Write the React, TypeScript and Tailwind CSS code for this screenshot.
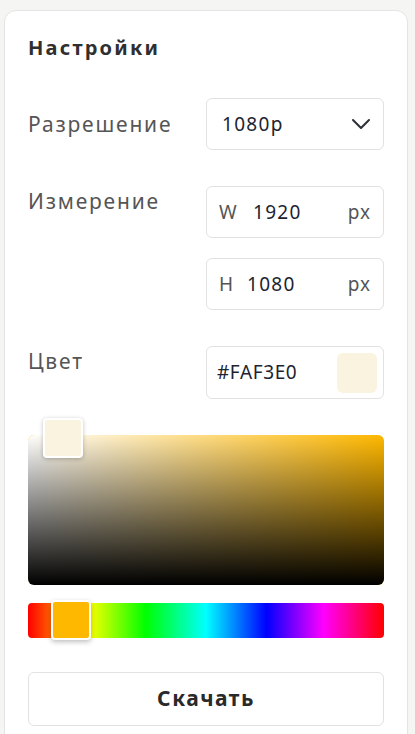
import React from "react";

const FONT = "font-['Noto_Sans','DejaVu_Sans',sans-serif]";

const Chevron = () => (
  <svg width="20" height="12" viewBox="0 0 20 12" fill="none">
    <path d="M2 2l8 8 8-8" stroke="#2b2f36" strokeWidth="2" strokeLinecap="round" strokeLinejoin="round" />
  </svg>
);

const Field = ({ children }: { children: React.ReactNode }) => (
  <div className="flex h-[52px] w-[178px] items-center rounded-md border border-[#e2e2e2] bg-white pl-[12px] pr-3">
    {children}
  </div>
);

export default function App() {
  return (
    <div className={`min-h-screen bg-[#f5f6f3] pl-1 pr-[7px] pt-[10px] ${FONT}`}>
      <div className="rounded-t-xl border border-[#e4e4e4] bg-white px-[23px] pb-8 pt-[25px]">
        <h2 className="text-[20px] font-bold leading-6 tracking-[2.2px] text-[#2f2f2f]">Настройки</h2>

        {/* resolution */}
        <div className="mt-[38px] flex items-center justify-between">
          <span className="text-[21px] leading-[30px] tracking-[1.8px] text-[#555]">Разрешение</span>
          <Field>
            <span className="flex-1 pl-[3px] text-[19px] tracking-[1.3px] text-[#1d2430]">1080p</span>
            <Chevron />
          </Field>
        </div>

        {/* dimensions */}
        <div className="mt-[36px] flex justify-between">
          <span className="text-[21px] leading-[30px] tracking-[1.8px] text-[#555]">Измерение</span>
          <div className="flex flex-col gap-5">
            <Field>
              <span className="w-[34px] text-[19px] text-[#555]">W</span>
              <span className="flex-1 text-[19px] tracking-[1.3px] text-[#1d2430]">1920</span>
              <span className="text-[19px] tracking-[1px] text-[#555]">px</span>
            </Field>
            <Field>
              <span className="w-[28px] text-[19px] text-[#555]">H</span>
              <span className="flex-1 text-[19px] tracking-[1.3px] text-[#1d2430]">1080</span>
              <span className="text-[19px] tracking-[1px] text-[#555]">px</span>
            </Field>
          </div>
        </div>

        {/* color */}
        <div className="mt-[36px] flex justify-between">
          <span className="text-[21px] leading-[30px] tracking-[1.8px] text-[#555]">Цвет</span>
          <div className="flex h-[53px] w-[178px] items-center rounded-md border border-[#e2e2e2] bg-white pl-[10px] pr-[6px]">
            <span className="flex-1 text-[19px] tracking-[0.6px] text-[#1d2430]">#FAF3E0</span>
            <div className="h-10 w-10 rounded-md bg-[#faf3e0]" />
          </div>
        </div>

        {/* saturation / value */}
        <div className="relative mt-[36px] h-[150px] rounded-md bg-[#ffb800]">
          <div className="absolute inset-0 rounded-md bg-gradient-to-r from-white to-transparent" />
          <div className="absolute inset-0 rounded-md bg-gradient-to-t from-black to-transparent" />
          <div className="absolute left-[15px] top-[-17px] h-10 w-10 rounded-[4px] border-2 border-white bg-[#faf3e0] shadow-[0_1px_4px_rgba(0,0,0,0.25)]" />
        </div>

        {/* hue */}
        <div className="relative mt-[18px] h-[35px] rounded-[4px] bg-[linear-gradient(to_right,#ff0000,#ffff00_17%,#00ff00_33%,#00ffff_50%,#0000ff_67%,#ff00ff_83%,#ff0000)]">
          <div className="absolute left-[23px] top-[-3px] h-10 w-10 rounded-[4px] border-2 border-white bg-[#ffb800] shadow-[0_2px_5px_rgba(0,0,0,0.25)]" />
        </div>

        <button className="mt-[34px] flex h-[54px] w-full items-center justify-center rounded-md border border-[#e2e2e2] bg-white text-[21px] font-bold tracking-[1.5px] text-[#2a2a2a]">
          Скачать
        </button>
      </div>
    </div>
  );
}
